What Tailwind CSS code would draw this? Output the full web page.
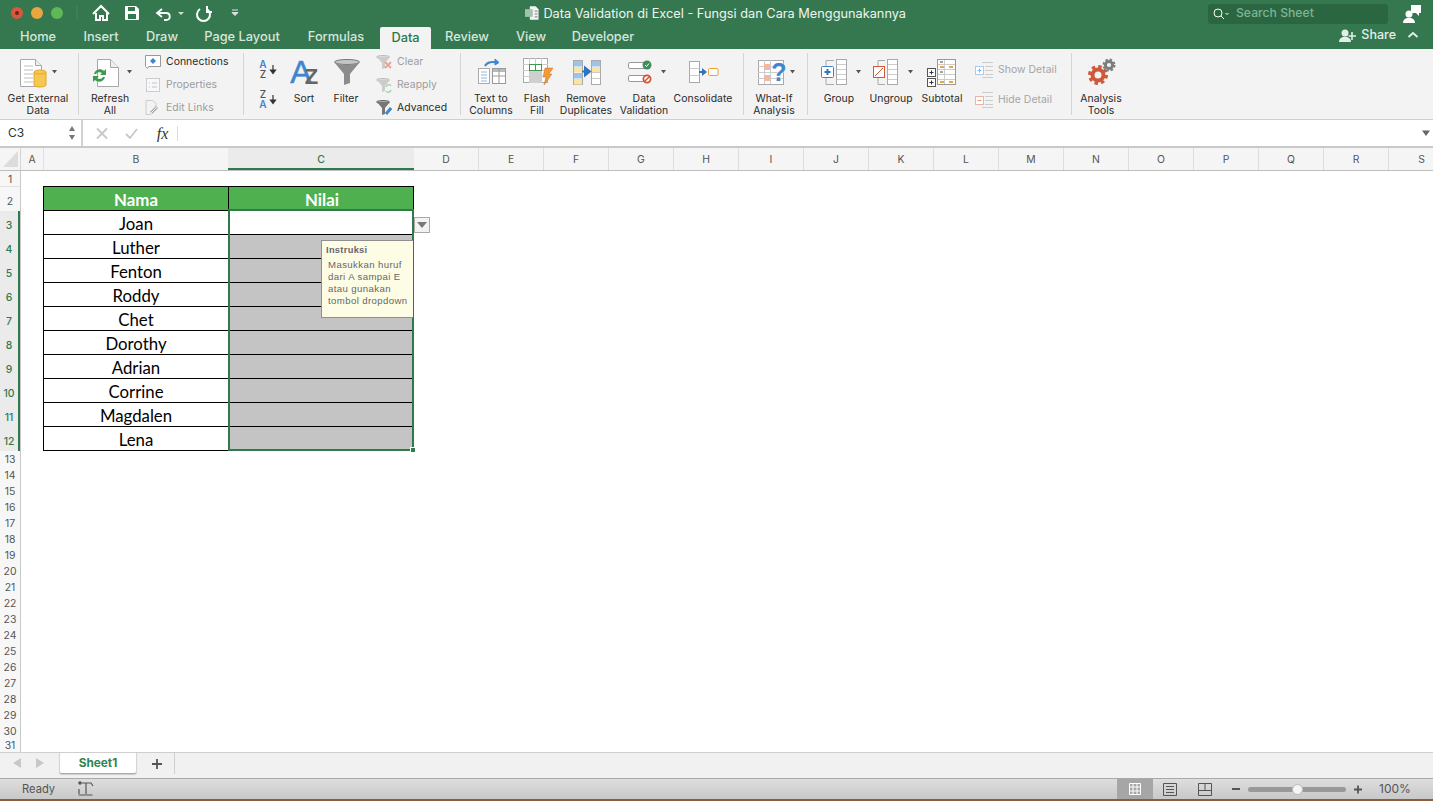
<!DOCTYPE html>
<html><head><meta charset="utf-8"><script src="https://cdn.jsdelivr.net/npm/@tailwindcss/browser@4"></script></head>
<body class="w-[1433px] h-[801px] overflow-hidden bg-white font-['Inter','Liberation_Sans',sans-serif]">
<div class="flex flex-col w-[1433px] h-[801px]">
<!-- title bar -->
<div class="h-[27px] flex items-center bg-[#35784f] text-white shrink-0">
<svg class="shrink-0" width="260" height="27" viewBox="0 0 260 27">
<circle cx="17" cy="13" r="6" fill="#d8573f"/><circle cx="17" cy="13" r="2" fill="#70251a"/><circle cx="37" cy="13" r="6" fill="#e9a540"/><circle cx="57" cy="13" r="6" fill="#5eb855"/>
<path d="M77 6v14" stroke="#44855c"/>
<path d="M93 14 101 6l8 8M96 13v7h4v-4h3v4h4v-7" fill="none" stroke="#fff" stroke-width="2"/>
<path d="M126 6h10l3 3v10a1 1 0 0 1-1 1h-12a1 1 0 0 1-1-1V7a1 1 0 0 1 1-1z" fill="#fff"/><rect x="128" y="7" width="7" height="4" fill="#35784f"/><rect x="128" y="14" width="8" height="5" fill="#35784f"/>
<path d="M162 9l-5 4 5 4M157 13h9c5 0 5 7 0 7h-2" fill="none" stroke="#fff" stroke-width="1.8"/><path d="M178 12h6l-3 3z" fill="#cfe0d5"/>
<path d="M200 9a6.500 6.500 0 1 0 7 0M207 6v6h5" fill="none" stroke="#fff" stroke-width="2"/>
<path d="M232 10h6M232 12.500h6l-3 3z" stroke="#d7e5dc" fill="#d7e5dc"/>
</svg>
<div class="flex items-center ml-[265px] w-[381px] shrink-0">
<svg width="19" height="17" viewBox="525 5 19 17"><path d="M530 6h6l3 3v11h-9z" fill="#f4f4f4"/><rect x="525" y="9" width="8" height="8" fill="#9fc4ad"/><path d="M535 11h3M535 14h3M535 17h3" stroke="#777"/></svg>
<span class="text-[12.75px] text-[#eef5f0] whitespace-nowrap">Data Validation di Excel - Fungsi dan Cara Menggunakannya</span>
</div>
<div class="ml-[302px] w-[180px] h-[20px] rounded-[3px] bg-[#2a6741] flex items-center pl-[4px] gap-[6px] shrink-0">
<svg width="18" height="14" viewBox="0 0 18 14"><circle cx="6" cy="6" r="4" fill="none" stroke="#fff"/><path d="M9 9l3 3" stroke="#fff"/><path d="M13.500 6l1.500 1.500L16.500 6" fill="none" stroke="#fff"/></svg>
<span class="text-[12.2px] font-medium text-[#7fb394]">Search Sheet</span>
</div>
<svg class="ml-[14px]" width="20" height="22" viewBox="1402 2 20 22"><path d="M1411 4h10v8h-2v3l-3-3h-5z" fill="#fff"/><circle cx="1409" cy="13" r="3.500" fill="#fff"/><path d="M1403 22c0-7 12-7 12 0z" fill="#fff"/></svg>
</div>
<!-- tabs -->
<div class="h-[22px] flex bg-[#35784f] text-[12.8px] font-medium text-[#d5e6dc] shrink-0 pl-[6px]">
<div class="w-[64px] text-center leading-[20px]">Home</div>
<div class="w-[62px] text-center leading-[20px]">Insert</div>
<div class="w-[60px] text-center leading-[20px]">Draw</div>
<div class="w-[100px] text-center leading-[20px] whitespace-nowrap">Page Layout</div>
<div class="w-[88px] text-center leading-[20px]">Formulas</div>
<div class="w-[51px] text-center leading-[21px] bg-[#f3f3f3] text-[#2b7a4b] rounded-t-[2px]">Data</div>
<div class="w-[72px] text-center leading-[20px]">Review</div>
<div class="w-[56px] text-center leading-[20px]">View</div>
<div class="w-[88px] text-center leading-[20px]">Developer</div>
<div class="ml-auto flex items-start">
<svg width="18" height="16" viewBox="0 0 18 16"><circle cx="6" cy="6" r="3.500" fill="#e2eee7"/><path d="M0 15c0-7 12-7 12 0z" fill="#e2eee7"/><path d="M13 5v8M9.500 9h7.500" stroke="#e2eee7" stroke-width="1.600"/></svg>
<span class="ml-[4px] text-[12.5px] leading-[15px] text-[#e2eee7]">Share</span>
<svg class="ml-[11px] mr-[14px]" width="12" height="18" viewBox="0 0 12 18"><path d="M1.500 10 6 6l4.500 4" fill="none" stroke="#e2eee7" stroke-width="1.800"/></svg>
</div>
</div>
<!-- ribbon -->
<div class="h-[70px] flex bg-[#f3f3f3] border-b border-[#cfcfcf] text-[10.4px] tracking-[0.05px] leading-[12px] text-[#2a2a2a] shrink-0 box-content">

<div class="w-[78px] flex flex-col items-center shrink-0"><svg width="78" height="44" viewBox="0 49 78 44">
<path d="M20.500 59.500h15l6 6v21h-21z" fill="#fff" stroke="#a8a8a8"/><path d="M35.500 59.500v6h6" fill="#eee" stroke="#a8a8a8"/><path d="M24 66h9M24 70h9M24 74h9M24 78h9M24 82h9" stroke="#c0c0c0"/>
<path d="M34 72a6 2 0 0 1 12 0v13a6 2 0 0 1-12 0z" fill="#f6c851" stroke="#e5a72f"/><path d="M34 72a6 2 0 0 0 12 0" fill="none" stroke="#e5a72f"/>
<path d="M52 70h5l-2.500 3.500z" fill="#555"/></svg><span class="w-[76px] mr-[2px] text-center">Get External Data</span></div>
<div class="w-px my-[4px] bg-[#d5d5d5] shrink-0"></div>

<div class="w-[66px] flex flex-col items-center shrink-0"><svg width="66" height="44" viewBox="79 49 66 44">
<path d="M97.500 59.500h13l8 8v19h-21z" fill="#fff" stroke="#a8a8a8"/><path d="M110.500 59.500v8h8" fill="#eee" stroke="#a8a8a8"/>
<path d="M94 74c1-5 7-6 10-3l2-2v6h-6l2-2c-2-1.500-5-1-6 1zM105 77c-1 5-7 6-10 3l-2 2v-6h6l-2 2c2 1.500 5 1 6-1z" fill="#3e9a4d"/>
<path d="M127 70h5l-2.500 3.500z" fill="#555"/></svg><span class="w-[62px] mr-[4px] text-center">Refresh<br>All</span></div>
<div class="w-[98px] flex flex-col shrink-0 pt-px">
<div class="h-[23px] flex items-center gap-[5px]"><svg width="16" height="16" viewBox="145 53 16 16"><path d="M145.500 54.500h15v11h-12l-1 2-2-2z" fill="#fff" stroke="#999"/><path d="M153 57l3 3-3 3-3-3z" fill="#3f86cf"/></svg>Connections</div>
<div class="h-[23px] flex items-center gap-[5px] text-[#9c9c9c]"><svg width="16" height="16" viewBox="145 76 16 16"><rect x="146.500" y="77.500" width="13" height="13" fill="#f8f8f8" stroke="#ccc"/><path d="M149 82h1M152 82h5M149 86h1M152 86h5" stroke="#b5c7d8"/></svg>Properties</div>
<div class="h-[23px] flex items-center gap-[5px] text-[#9c9c9c]"><svg width="16" height="18" viewBox="146 98 16 18"><path d="M147 99.500h7l3 3v7M147 99.500v14h5" fill="none" stroke="#ccc"/><path d="M152 112l6-6" stroke="#aaa" stroke-width="3"/><path d="M152 112l6-6" stroke="#f3f3f3"/></svg>Edit Links</div>
</div>
<div class="w-px my-[4px] bg-[#d5d5d5] shrink-0"></div>

<div class="w-[40px] shrink-0"><svg width="40" height="60" viewBox="244 49 40 60">
<text x="263" y="68" text-anchor="middle" font-size="10" font-family="Inter" font-weight="600" fill="#3f86cf">A</text><text x="263" y="78" text-anchor="middle" font-size="10" font-family="Inter" font-weight="500" fill="#555">Z</text><path d="M273 65v7M270.500 70h5l-2.500 3.500z" stroke="#333" fill="#333" stroke-width="1.200"/>
<text x="263" y="98" text-anchor="middle" font-size="10" font-family="Inter" font-weight="500" fill="#555">Z</text><text x="263" y="108" text-anchor="middle" font-size="10" font-family="Inter" font-weight="600" fill="#3f86cf">A</text><path d="M273 95v7M270.500 100h5l-2.500 3.500z" stroke="#333" fill="#333" stroke-width="1.200"/></svg></div>
<div class="w-[40px] flex flex-col items-center shrink-0"><svg width="40" height="44" viewBox="284 49 40 44">
<text x="301" y="83" text-anchor="middle" font-size="32" font-family="Liberation Sans" font-weight="400" stroke="#3f86cf" stroke-width=".5" fill="#3f86cf">A</text><text x="311.500" y="84" text-anchor="middle" font-size="22" font-family="Liberation Sans" font-weight="700" fill="#666">Z</text></svg><span>Sort</span></div>
<div class="w-[44px] flex flex-col items-center shrink-0"><svg width="44" height="44" viewBox="324 49 44 44">
<ellipse cx="347" cy="62" rx="12.500" ry="2.500" fill="#c6c6c6" stroke="#777"/><path d="M334.500 62.500 344 74v11l6-2V74l9.500-11.500c-6 3-19 3-25 0z" fill="#8c8c8c"/></svg><span>Filter</span></div>
<div class="w-[84px] ml-[8px] flex flex-col shrink-0 pt-px">
<div class="h-[23px] flex items-center gap-[5px] text-[#9c9c9c]"><svg width="16" height="18" viewBox="376 52 16 18"><ellipse cx="383" cy="56" rx="6.500" ry="1.500" fill="#ddd" stroke="#bbb"/><path d="M377 56l5 6v6l3-1v-5l5-6z" fill="#ccc"/><path d="M385 61l6 6m0-6-6 6" stroke="#e8a493" stroke-width="1.800"/></svg>Clear</div>
<div class="h-[23px] flex items-center gap-[5px] text-[#9c9c9c]"><svg width="16" height="18" viewBox="376 75 16 18"><ellipse cx="383" cy="79" rx="6.500" ry="1.500" fill="#ddd" stroke="#bbb"/><path d="M377 79l5 6v6l3-1v-5l5-6z" fill="#ccc"/><path d="M386 86c1-3 4-3 5-1M391 89c-1 3-4 3-5 1" fill="none" stroke="#9fcfa8" stroke-width="1.300"/></svg>Reapply</div>
<div class="h-[23px] flex items-center gap-[5px]"><svg width="16" height="18" viewBox="376 98 16 18"><ellipse cx="383" cy="101" rx="6.500" ry="1.500" fill="#aaa" stroke="#666"/><path d="M377 101l5 6v7l3-1v-6l5-6z" fill="#777"/><path d="M386 113l5-6" stroke="#3f86cf" stroke-width="3"/></svg>Advanced</div>
</div>
<div class="w-px my-[4px] bg-[#d5d5d5] shrink-0"></div>

<div class="w-[60px] flex flex-col items-center shrink-0"><svg width="60" height="44" viewBox="461 49 60 44">
<path d="M485 66c2-4 8-5 12-3" fill="none" stroke="#3f86cf" stroke-width="2"/><path d="M495 59l4 3.500-4 2.500z" fill="#3f86cf" stroke="#3f86cf"/>
<rect x="478.500" y="68.500" width="11" height="15" fill="#fff" stroke="#aaa"/><path d="M481 72h6M481 75h6M481 78h6M481 81h6" stroke="#8db8e2"/>
<rect x="492.500" y="68.500" width="13" height="15" fill="#fff" stroke="#999"/><rect x="493" y="69" width="12" height="3" fill="#bbb"/><path d="M499 69v14M493 76h12" stroke="#999"/></svg><span class="text-center">Text to Columns</span></div>
<div class="w-[32px] flex flex-col items-center shrink-0"><svg width="32" height="44" viewBox="521 49 32 44">
<rect x="523.500" y="58.500" width="24" height="24" fill="#fff" stroke="#aaa"/><path d="M523 64.500h25M523 70.500h25M523 76.500h25M529.500 58v25M535.500 58v25M541.500 58v25" stroke="#ccc"/><rect x="530" y="71" width="11" height="12" fill="#cfcfcf"/><rect x="529.500" y="64.500" width="6" height="6" fill="#fff" stroke="#3e9a4d"/><rect x="535.500" y="64.500" width="6" height="6" fill="#fff" stroke="#3e9a4d"/>
<path d="M545 68h8l-4 6h3l-8 11 2-8h-3z" fill="#f09a38" stroke="#d9682c" stroke-width=".5"/></svg><span class="text-center">Flash Fill</span></div>
<div class="w-[66px] flex flex-col items-center shrink-0"><svg width="66" height="44" viewBox="553 49 66 44">
<rect x="573.500" y="60.500" width="9" height="24" fill="#fff" stroke="#aaa"/><rect x="574" y="61" width="8" height="5.500" fill="#9cc3ea"/><rect x="574" y="67" width="8" height="5.500" fill="#fbe3a0"/><rect x="574" y="73" width="8" height="5.500" fill="#9cc3ea"/><rect x="574" y="79" width="8" height="5.500" fill="#fbe3a0"/>
<rect x="591.500" y="60.500" width="9" height="24" fill="#fff" stroke="#aaa"/><rect x="592" y="61" width="8" height="5.500" fill="#9cc3ea"/><rect x="592" y="67" width="8" height="5.500" fill="#fbe3a0"/><path d="M592 72.500h8M592 78.500h8" stroke="#ccc"/>
<path d="M582 71.500h5M585 67.500l5 4-5 4z" stroke="#2e74c0" stroke-width="2" fill="#2e74c0"/></svg><span class="text-center">Remove Duplicates</span></div>
<div class="w-[50px] flex flex-col items-center shrink-0"><svg width="50" height="44" viewBox="619 49 50 44">
<rect x="628.500" y="62.500" width="20" height="6" rx="1.500" fill="#fff" stroke="#999"/><circle cx="647" cy="65" r="4.500" fill="#3e8f5b"/><path d="M645 65l1.500 1.500L649 63.500" fill="none" stroke="#fff"/>
<rect x="628.500" y="75.500" width="20" height="6" rx="1.500" fill="#fff" stroke="#999"/><circle cx="647" cy="79" r="3.600" fill="#fff" stroke="#cf5235" stroke-width="1.800"/><path d="M645 81l4-4" stroke="#cf5235" stroke-width="1.500"/>
<path d="M661 70h5l-2.500 3.500z" fill="#555"/></svg><span class="text-center">Data Validation</span></div>
<div class="w-[68px] flex flex-col items-center shrink-0"><svg width="68" height="44" viewBox="669 49 68 44">
<rect x="689.500" y="61.500" width="10" height="21" fill="#fff" stroke="#aaa"/><path d="M690 68.500h9M690 75.500h9" stroke="#ccc"/><path d="M699 72h4" stroke="#2e74c0" stroke-width="2"/><path d="M702 68l5 4-5 4z" fill="#2e74c0"/><rect x="708.500" y="68.500" width="9.500" height="7" rx="1" fill="#fff" stroke="#ef9f3c"/></svg><span>Consolidate</span></div>
<div class="w-px ml-[6px] my-[4px] bg-[#d5d5d5] shrink-0"></div>

<div class="w-[60px] mr-[3px] flex flex-col items-center shrink-0"><svg width="60" height="44" viewBox="744 49 60 44" class="overflow-visible">
<rect x="758.500" y="60.500" width="25" height="24" fill="#fff" stroke="#aaa"/><path d="M758 66.500h25M758 72.500h25M758 78.500h25M764.500 60v24M770.500 60v24" stroke="#ccc"/><rect x="764" y="64" width="6" height="6" fill="#f2b9a0"/><rect x="764" y="75" width="6" height="6" fill="#f2b9a0"/>
<text x="779" y="81" text-anchor="middle" font-size="25" font-weight="700" font-family="Liberation Sans" stroke="#f3f3f3" stroke-width="1" paint-order="stroke" fill="#3f86cf">?</text>
<path d="M790 70h5l-2.500 3.500z" fill="#555"/></svg><span class="text-center">What-If Analysis</span></div>
<div class="w-px my-[4px] bg-[#d5d5d5] shrink-0"></div>

<div class="w-[62px] flex flex-col items-center shrink-0"><svg width="62" height="44" viewBox="808 49 62 44">
<path d="M834 60.500h-8v24h8" fill="none" stroke="#aaa"/><rect x="836.500" y="59.500" width="10" height="25" fill="#fff" stroke="#aaa"/><path d="M837 64.500h9M837 69.500h9M837 74.500h9M837 79.500h9" stroke="#ccc"/>
<rect x="821.500" y="66.500" width="12" height="11" rx="1" fill="#fff" stroke="#3f86cf"/><path d="M827.500 69v6M824.500 72h6" stroke="#2e74c0" stroke-width="2"/><path d="M856 70h5l-2.500 3.500z" fill="#555"/></svg><span>Group</span></div>
<div class="w-[42px] flex flex-col items-center shrink-0"><svg class="overflow-visible" width="42" height="44" viewBox="870 49 42 44">
<path d="M885 60.500h-7v24h7" fill="none" stroke="#aaa"/><rect x="887.500" y="59.500" width="10" height="25" fill="#fff" stroke="#aaa"/><path d="M888 64.500h9M888 69.500h9M888 74.500h9M888 79.500h9" stroke="#ccc"/>
<rect x="873.500" y="66.500" width="11" height="11" fill="#fff" stroke="#d2583a"/><path d="M875 76l8-8" stroke="#d2583a"/><path d="M908 70h5l-2.500 3.500z" fill="#555"/></svg><span>Ungroup</span></div>
<div class="w-[60px] flex flex-col items-center shrink-0"><svg width="60" height="44" viewBox="912 49 60 44">
<rect x="937.500" y="59.500" width="18" height="25" fill="#fff" stroke="#999"/><path d="M938 64.500h17M938 69.500h17M938 74.500h17M938 79.500h17M944.500 60v24" stroke="#ccc"/><path d="M940 62h3M940 72h3" stroke="#444"/><path d="M940 67h4M949 67h4M940 82h4M949 82h4" stroke="#eda53c" stroke-width="2"/>
<rect x="927.500" y="68.500" width="8" height="8" fill="#fff" stroke="#555"/><path d="M929.500 72.500h4M931.500 70.500v4" stroke="#333"/><rect x="927.500" y="78.500" width="8" height="8" fill="#fff" stroke="#555"/><path d="M929.500 82.500h4M931.500 80.500v4" stroke="#333"/></svg><span>Subtotal</span></div>
<div class="w-[96px] ml-[3px] flex flex-col pt-[6px] shrink-0 text-[#a5a5a5]">
<div class="h-[30px] flex items-center gap-[5px]"><svg width="18" height="18" viewBox="975 60 18 18"><rect x="975.500" y="65.500" width="8" height="8" fill="#fff" stroke="#a9cbee"/><path d="M977.500 69.500h4M979.500 67.500v4" stroke="#8cb7e4"/><path d="M982 61.500h11M985 65.500h8M985 69.500h8M985 73.500h8M982 76.500h11" stroke="#ccc"/></svg>Show Detail</div>
<div class="h-[30px] flex items-center gap-[5px]"><svg width="18" height="18" viewBox="975 90 18 18"><rect x="975.500" y="95.500" width="8" height="8" fill="#fff" stroke="#eeb4a2"/><path d="M977.500 99.500h4" stroke="#e59b84"/><path d="M982 91.500h11M985 95.500h8M985 99.500h8M985 103.500h8M982 106.500h11" stroke="#ccc"/></svg>Hide Detail</div>
</div>
<div class="w-px my-[4px] bg-[#d5d5d5] shrink-0"></div>
<div class="w-[58px] flex flex-col items-center shrink-0"><svg width="58" height="44" viewBox="1072 49 58 44">
<circle cx="1098" cy="75" r="5.500" fill="none" stroke="#d0583a" stroke-width="4"/><circle cx="1098" cy="75" r="8.500" fill="none" stroke="#d0583a" stroke-width="3" stroke-dasharray="3.500 3.170"/>
<circle cx="1109" cy="65" r="3.600" fill="none" stroke="#7d7d7d" stroke-width="3"/><circle cx="1109" cy="65" r="5.500" fill="none" stroke="#7d7d7d" stroke-width="2" stroke-dasharray="2.400 1.920"/></svg><span class="text-center">Analysis Tools</span></div>
</div>
<!-- formula bar -->
<div class="h-[26px] flex items-center bg-white shrink-0 border-b-[2px] border-[#c9c9c9] box-content">
<div class="w-[83px] h-full flex items-center border-r-[2px] border-[#d2d2d2] bg-white pl-[8px] pr-[5px] justify-between text-[12px] text-[#333]"><span>C3</span>
<svg width="8" height="18" viewBox="0 0 8 18"><path d="M1 7 4 2l3 5zM1 11l3 5 3-5z" fill="#777"/></svg></div>
<svg class="ml-[13px]" width="82" height="18" viewBox="97 124 82 18"><path d="M98 128.500l10 10m0-10-10 10M127 134l4 4 7-9" fill="none" stroke="#c8c8c8" stroke-width="1.800"/><path d="M178.500 126v15" stroke="#ddd"/><text x="163.500" y="139" text-anchor="middle" font-family="Liberation Serif" font-style="italic" font-size="16" fill="#333">fx</text></svg>
<svg class="ml-auto mr-[3px]" width="8" height="8" viewBox="0 0 8 8"><path d="M0 1.500h8L4 7z" fill="#666"/></svg>
</div>
<!-- column headers -->
<div class="h-[23px] flex overflow-hidden bg-[#f5f5f5] border-b border-[#bdbdbd] text-[10.4px] text-[#555] leading-[24px] text-center shrink-0">
<div class="w-[21px] border-r border-[#d5d5d5] shrink-0"><svg width="20" height="22" viewBox="0 0 20 22"><path d="M18 3v16H3z" fill="#dcdcdc"/></svg></div>
<div class="w-[23px] border-r border-[#e0e0e0] shrink-0">A</div>
<div class="w-[184px] shrink-0">B</div>
<div class="w-[186px] bg-[#ebebeb] text-[#2f7a4b] border-b-2 border-[#2f7a4b] h-[22px] shrink-0 font-medium">C</div>
<div class="w-[65px] border-r border-[#dedede] shrink-0">D</div>
<div class="w-[65px] border-r border-[#dedede] shrink-0">E</div>
<div class="w-[65px] border-r border-[#dedede] shrink-0">F</div>
<div class="w-[65px] border-r border-[#dedede] shrink-0">G</div>
<div class="w-[65px] border-r border-[#dedede] shrink-0">H</div>
<div class="w-[65px] border-r border-[#dedede] shrink-0">I</div>
<div class="w-[65px] border-r border-[#dedede] shrink-0">J</div>
<div class="w-[65px] border-r border-[#dedede] shrink-0">K</div>
<div class="w-[65px] border-r border-[#dedede] shrink-0">L</div>
<div class="w-[65px] border-r border-[#dedede] shrink-0">M</div>
<div class="w-[65px] border-r border-[#dedede] shrink-0">N</div>
<div class="w-[65px] border-r border-[#dedede] shrink-0">O</div>
<div class="w-[65px] border-r border-[#dedede] shrink-0">P</div>
<div class="w-[65px] border-r border-[#dedede] shrink-0">Q</div>
<div class="w-[65px] border-r border-[#dedede] shrink-0">R</div>
<div class="w-[65px] shrink-0">S</div>
</div>
<!-- sheet -->
<div class="flex-1 min-h-0 flex overflow-hidden">
<div class="w-[21px] shrink-0 border-r border-[#c9c9c9] bg-[#f7f7f7] text-[10.4px] text-center text-[#555] flex flex-col">
<div class="h-[16px] leading-[17px] border-b border-[#e3e3e3] shrink-0">1</div>
<div class="h-[24px] leading-[30px] shrink-0">2</div>
<div class="h-[24px] leading-[30px] bg-[#ebebeb] text-[#2f7a4b] border-r-2 border-[#2f7a4b] font-medium shrink-0">3</div>
<div class="h-[24px] leading-[30px] bg-[#ebebeb] text-[#2f7a4b] border-r-2 border-[#2f7a4b] font-medium shrink-0">4</div>
<div class="h-[24px] leading-[30px] bg-[#ebebeb] text-[#2f7a4b] border-r-2 border-[#2f7a4b] font-medium shrink-0">5</div>
<div class="h-[24px] leading-[30px] bg-[#ebebeb] text-[#2f7a4b] border-r-2 border-[#2f7a4b] font-medium shrink-0">6</div>
<div class="h-[24px] leading-[30px] bg-[#ebebeb] text-[#2f7a4b] border-r-2 border-[#2f7a4b] font-medium shrink-0">7</div>
<div class="h-[24px] leading-[30px] bg-[#ebebeb] text-[#2f7a4b] border-r-2 border-[#2f7a4b] font-medium shrink-0">8</div>
<div class="h-[24px] leading-[30px] bg-[#ebebeb] text-[#2f7a4b] border-r-2 border-[#2f7a4b] font-medium shrink-0">9</div>
<div class="h-[24px] leading-[30px] bg-[#ebebeb] text-[#2f7a4b] border-r-2 border-[#2f7a4b] font-medium shrink-0">10</div>
<div class="h-[24px] leading-[30px] bg-[#ebebeb] text-[#2f7a4b] border-r-2 border-[#2f7a4b] font-medium shrink-0">11</div>
<div class="h-[24px] leading-[30px] bg-[#ebebeb] text-[#2f7a4b] border-r-2 border-[#2f7a4b] font-medium shrink-0">12</div>
<div class="h-[16px] leading-[18px] shrink-0">13</div><div class="h-[16px] leading-[18px] shrink-0">14</div><div class="h-[16px] leading-[18px] shrink-0">15</div><div class="h-[16px] leading-[18px] shrink-0">16</div><div class="h-[16px] leading-[18px] shrink-0">17</div><div class="h-[16px] leading-[18px] shrink-0">18</div><div class="h-[16px] leading-[18px] shrink-0">19</div><div class="h-[16px] leading-[18px] shrink-0">20</div><div class="h-[16px] leading-[18px] shrink-0">21</div><div class="h-[16px] leading-[18px] shrink-0">22</div><div class="h-[16px] leading-[18px] shrink-0">23</div><div class="h-[16px] leading-[18px] shrink-0">24</div><div class="h-[16px] leading-[18px] shrink-0">25</div><div class="h-[16px] leading-[18px] shrink-0">26</div><div class="h-[16px] leading-[18px] shrink-0">27</div><div class="h-[16px] leading-[18px] shrink-0">28</div><div class="h-[16px] leading-[18px] shrink-0">29</div><div class="h-[16px] leading-[18px] shrink-0">30</div><div class="h-[13px] leading-[13px] shrink-0">31</div>
</div>
<div class="pl-[22px] pt-[15px] flex-1 bg-white">
<div class="relative w-[371px] font-['Lato',sans-serif] text-[16.8px] text-black text-center">
<div class="grid grid-cols-[185px_185px] border-t border-l border-black">
<div class="h-[24px] bg-[#4fb050] text-white font-bold leading-[26px] border-r border-b border-black">Nama</div><div class="h-[24px] bg-[#4fb050] text-white font-bold leading-[26px] border-r border-b border-black pl-[2px]">Nilai</div>
<div class="h-[24px] leading-[25px] border-r border-b border-black">Joan</div><div class="h-[24px] border-b border-black bg-white"></div>
<div class="h-[24px] leading-[25px] border-r border-b border-black">Luther</div><div class="h-[24px] border-b border-black bg-[#c4c4c4]"></div>
<div class="h-[24px] leading-[25px] border-r border-b border-black">Fenton</div><div class="h-[24px] border-b border-black bg-[#c4c4c4]"></div>
<div class="h-[24px] leading-[25px] border-r border-b border-black">Roddy</div><div class="h-[24px] border-b border-black bg-[#c4c4c4]"></div>
<div class="h-[24px] leading-[25px] border-r border-b border-black">Chet</div><div class="h-[24px] border-b border-black bg-[#c4c4c4]"></div>
<div class="h-[24px] leading-[25px] border-r border-b border-black">Dorothy</div><div class="h-[24px] border-b border-black bg-[#c4c4c4]"></div>
<div class="h-[24px] leading-[25px] border-r border-b border-black">Adrian</div><div class="h-[24px] border-b border-black bg-[#c4c4c4]"></div>
<div class="h-[24px] leading-[25px] border-r border-b border-black">Corrine</div><div class="h-[24px] border-b border-black bg-[#c4c4c4]"></div>
<div class="h-[24px] leading-[25px] border-r border-b border-black">Magdalen</div><div class="h-[24px] border-b border-black bg-[#c4c4c4]"></div>
<div class="h-[24px] leading-[25px] border-r border-b border-black">Lena</div><div class="h-[24px] border-b border-black bg-[#c4c4c4]"></div>
</div>
<!-- selection outline -->
<div class="absolute left-[185px] top-[23px] w-[186px] h-[242px] border-2 border-[#2f7a4b]"></div>
<div class="absolute left-[367px] top-[261px] w-[6px] h-[6px] bg-[#2f7a4b] border border-white"></div>
<!-- dropdown -->
<div class="absolute left-[371px] top-[31px] w-[16px] h-[16px] bg-[#f2f2f2] border border-[#aaa] flex items-center justify-center"><svg width="10" height="6" viewBox="0 0 10 6"><path d="M0 0h10L5 6z" fill="#777"/></svg></div>
<!-- input message -->
<div class="absolute left-[278px] top-[54px] w-[92px] h-[78px] bg-[#fdfde6] border border-[#8f8f8f] border-r-0 font-['Liberation_Sans',sans-serif] text-left text-[#666] text-[9.6px] tracking-[0.4px] leading-[12px] pl-[4px] pt-[3px]">
<div class="font-bold text-[9.3px] tracking-[0.3px]">Instruksi</div>
<div class="pl-[2px] pt-[3px] whitespace-nowrap">Masukkan huruf<br>dari A sampai E<br>atau gunakan<br>tombol dropdown</div>
</div>
</div>
</div>
</div>
<!-- tabs bar -->
<div class="h-[26px] flex bg-[#f1f1f1] border-t border-[#cfcfcf] shrink-0">
<svg class="ml-[10px] shrink-0" width="38" height="24" viewBox="10 753 38 24"><path d="M21 758v10l-8-5zM36 758v10l8-5z" fill="#c8c8c8"/></svg>
<div class="ml-[11px] w-[78px] h-[21px] bg-white rounded-b-[3px] border-b border-[#aaa] shadow-[0_1px_1px_rgba(0,0,0,0.15)] text-center text-[#2f8552] font-bold text-[11.8px] leading-[21px] border-x border-x-[#d5d5d5]">Sheet1</div>
<div class="w-[38px] h-[21px] pl-[2px] border-r border-[#d0d0d0] flex items-center justify-center"><svg width="12" height="12" viewBox="0 0 12 12"><path d="M6 1v10M1 6h10" stroke="#555" stroke-width="1.800"/></svg></div>
</div>
<!-- status bar -->
<div class="h-[21px] flex items-center bg-gradient-to-b from-[#dedede] to-[#c8c8c8] border-t border-[#a9a9a9] text-[11.2px] text-[#555] shrink-0">
<span class="ml-[22px] w-[56px]">Ready</span>
<svg width="16" height="16" viewBox="78 781 16 16"><circle cx="80" cy="783" r="1.800" fill="#555"/><path d="M82 783h9l2 3M86 783v11M79 789v5M78.500 795h14" fill="none" stroke="#555" stroke-width="1.200"/></svg>
<div class="ml-auto flex items-center h-[20px]">
<div class="w-[36px] h-[20px] bg-[#a6a6a6] flex items-center justify-center"><svg width="14" height="12" viewBox="0 0 14 12"><path d="M1.500.5h11v11h-11zM1.500 4h11M1.500 8h11M5 .5v11M9 .5v11" fill="none" stroke="#fff"/></svg></div>
<div class="w-[33px] h-[20px] flex items-center justify-center"><svg width="14" height="13" viewBox="0 0 14 13"><path d="M.5.500h13v12H.5z" fill="none" stroke="#555"/><path d="M3 3.500h8M3 6.500h8M3 9.500h8" stroke="#555"/></svg></div>
<div class="w-[38px] h-[20px] flex items-center justify-center"><svg width="14" height="13" viewBox="0 0 14 13"><path d="M.5.500h13v12H.5zM.5 7.500h6.500V.5M7 7.500h6.500" fill="none" stroke="#555"/></svg></div>
<svg class="ml-[8px]" width="10" height="4" viewBox="0 0 10 4"><path d="M0 2h8" stroke="#555" stroke-width="2"/></svg>
<div class="relative w-[98px] h-[5px] ml-[6px] bg-[#999] rounded-full"><div class="absolute left-[44px] -top-[3px] w-[11px] h-[11px] rounded-full bg-[#f5f5f5] border border-[#bbb]"></div></div>
<svg class="ml-[8px]" width="9" height="9" viewBox="0 0 9 9"><path d="M0 4.500h8M4 .5v8" stroke="#555" stroke-width="1.800"/></svg>
<span class="ml-[16px] w-[54px] text-[12px]">100%</span>
</div>
</div>
<div class="h-[2px] bg-[#8c5e3f] shrink-0"></div>
</div>
</body></html>
